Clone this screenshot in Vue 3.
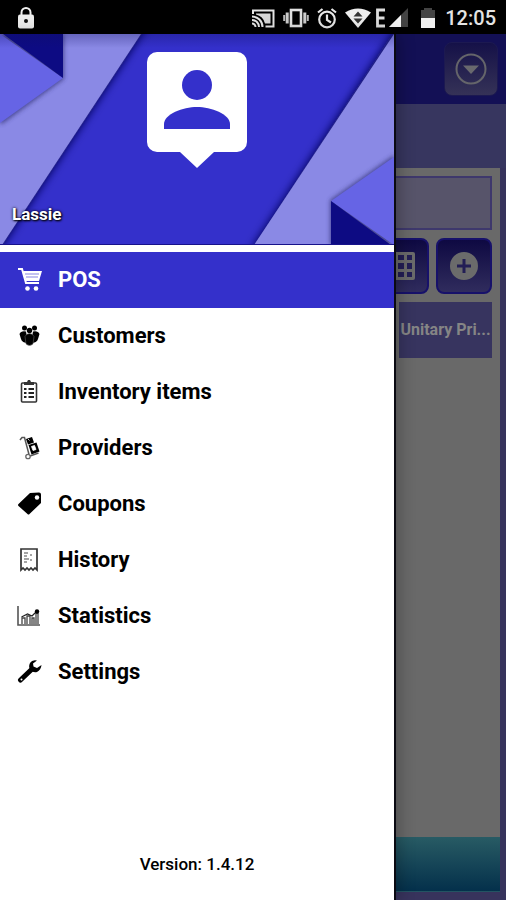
<script setup>
import { ref } from 'vue'

const items = [
  { id: 'pos', label: 'POS' },
  { id: 'customers', label: 'Customers' },
  { id: 'inventory', label: 'Inventory items' },
  { id: 'providers', label: 'Providers' },
  { id: 'coupons', label: 'Coupons' },
  { id: 'history', label: 'History' },
  { id: 'statistics', label: 'Statistics' },
  { id: 'settings', label: 'Settings' },
]
const active = ref('pos')
const search = ref('')
</script>

<template>
  <div class="screen">
    <header class="status">
      <svg class="lock" width="18" height="24" viewBox="0 0 18 24" aria-hidden="true">
        <path d="M4.500 10V6.500a4.500 4.500 0 0 1 9 0V10" fill="none" stroke="#eee" stroke-width="2" />
        <rect x="1" y="8.500" width="16" height="14" rx="2" fill="#eee" />
        <circle cx="9" cy="15" r="2" fill="#111" />
      </svg>
      <div class="tray">
        <svg width="24" height="20" viewBox="0 0 24 20" aria-hidden="true">
          <path d="M5 5.500H19.500V15.500H14Q12 8 5 6.500Z" fill="#d8d8d8" />
          <g fill="none" stroke="#e6e6e6" stroke-width="2">
            <path d="M2 6V2.500h20.500v16h-8" />
            <path d="M1 15.500a3.500 3.500 0 0 1 3.500 3.500M1 12a7 7 0 0 1 7 7M1 8.500a10.500 10.500 0 0 1 10.500 10.500" />
          </g>
        </svg>
        <svg width="26" height="20" viewBox="0 0 26 20" aria-hidden="true">
          <rect x="8" y="2" width="10" height="16" fill="none" stroke="#e0e0e0" stroke-width="2.600" />
          <path d="M4.200 4.500v11M21.800 4.500v11" stroke="#ccc" stroke-width="3" />
          <path d="M1.200 7v6M24.800 7v6" stroke="#bbb" stroke-width="2" />
        </svg>
        <svg width="20" height="22" viewBox="0 0 20 22" aria-hidden="true">
          <g fill="none" stroke="#e6e6e6" stroke-width="2.200">
            <circle cx="10" cy="12.500" r="7.800" />
            <path d="M10 7.500v5.500l4 2.500M1 5.500l4.500-3.500M19 5.500l-4.500-3.500" />
          </g>
        </svg>
        <svg class="wifi" width="26" height="20" viewBox="0 0 26 20" aria-hidden="true">
          <path d="M0 4.500Q13-3.500 26 4.500L13 20Z" fill="#eee" />
          <path d="M13 3.500l4.500 5h-9ZM13 15.500l4.500-5h-9Z" fill="#333" />
        </svg>
        <svg class="signal" width="34" height="20" viewBox="0 0 34 20" aria-hidden="true">
          <path d="M10 2H2.500v16H10M2 10h7.500" fill="none" stroke="#ddd" stroke-width="2.800" />
          <path d="M14 19L33 0V19Z" fill="#444" />
          <path d="M14 19L26 7V19Z" fill="#f4f4f4" />
        </svg>
        <svg width="14" height="22" viewBox="0 0 14 22" aria-hidden="true">
          <path d="M0 3h3V1h8v2h3v8H0Z" fill="#444" />
          <path d="M0 11h14v10H0Z" fill="#f0f0f0" />
        </svg>
        <time class="clock">12:05</time>
      </div>
    </header>

    <div class="stage">
      <main class="page">
        <div class="appbar">
          <button class="more" type="button" aria-label="More">
            <svg width="32" height="32" viewBox="0 0 32 32" aria-hidden="true">
              <circle cx="16" cy="16" r="14.500" fill="none" stroke="#65656a" stroke-width="2" />
              <path d="M8 12.500h16L16 21Z" fill="#69696e" />
            </svg>
          </button>
        </div>
        <div class="band"></div>
        <section class="panel">
          <div class="work">
            <input v-model="search" class="field" type="text" aria-label="Search" />
            <div class="tools">
              <button type="button" aria-label="Keypad">
                <svg width="28" height="28" viewBox="0 0 28 28" aria-hidden="true">
                  <rect width="28" height="28" rx="2" fill="#6b6b6b" />
                  <path d="M3 3h5v5H3zM11 3h6v5h-6zM20 3h5v5h-5zM3 11h5v6H3zM11 11h6v6h-6zM20 11h5v6h-5zM3 20h5v5H3zM11 20h6v5h-6zM20 20h5v5h-5z" fill="#231e55" />
                </svg>
              </button>
              <button type="button" aria-label="Add">
                <svg width="28" height="28" viewBox="0 0 28 28" aria-hidden="true">
                  <circle cx="14" cy="14" r="14" fill="#6b6b6b" />
                  <path d="M14 7v14M7 14h14" stroke="#231e55" stroke-width="3" />
                </svg>
              </button>
            </div>
            <div class="column-head">Unitary Pri...</div>
          </div>
          <div class="total"></div>
        </section>
      </main>

      <aside class="drawer">
        <div class="banner">
          <svg class="art" viewBox="0 0 394 211" preserveAspectRatio="none" aria-hidden="true">
            <defs>
              <filter id="soft" x="-20%" y="-20%" width="140%" height="140%">
                <feGaussianBlur stdDeviation="4" />
              </filter>
              <filter id="fine" x="-20%" y="-20%" width="140%" height="140%">
                <feGaussianBlur stdDeviation="2" />
              </filter>
              <linearGradient id="topshade" x1="0" y1="0" x2="0" y2="1">
                <stop offset="0" stop-color="#101060" stop-opacity=".3" />
                <stop offset="1" stop-color="#101060" stop-opacity="0" />
              </linearGradient>
            </defs>
            <rect width="394" height="211" fill="#3430cb" />
            <path d="M-20 -10H149L2 213H-20Z" fill="#08085c" filter="url(#soft)" />
            <path d="M0 0H141L2 211H0Z" fill="#8a89e5" />
            <path d="M398 -10L251 215H410V-10Z" fill="#08085c" filter="url(#soft)" />
            <path d="M394 0L254 211H394Z" fill="#8a89e5" />
            <path d="M0 0H64V45L2 90H0Z" fill="#333377" opacity=".7" filter="url(#fine)" />
            <path d="M0 0L63 44L0 89Z" fill="#6664e5" />
            <path d="M3 0H63V44Z" fill="#0d0b83" />
            <path d="M394 121L330 166V211H394Z" fill="#333377" opacity=".7" filter="url(#fine)" />
            <path d="M394 123L331 167L394 211Z" fill="#6664e5" />
            <path d="M331 167V211H391Z" fill="#0d0b83" />
            <rect width="394" height="14" fill="url(#topshade)" />
            <path d="M0 210.500H394" stroke="#17128b" />
          </svg>
          <svg class="avatar" width="100" height="116" viewBox="0 0 100 116" aria-hidden="true">
            <path d="M10 0H90A10 10 0 0 1 100 10V90A10 10 0 0 1 90 100H67L50 116L33 100H10A10 10 0 0 1 0 90V10A10 10 0 0 1 10 0Z" fill="#fff" />
            <circle cx="50" cy="33" r="15" fill="#3430cb" />
            <path d="M17 77V72C17 62 36 55 50 55S83 62 83 72V77Z" fill="#3430cb" />
          </svg>
          <span class="user">Lassie</span>
        </div>

        <nav class="menu">
          <a
            v-for="item in items"
            :key="item.id"
            href="#"
            :class="['entry', { active: item.id === active }]"
            @click.prevent="active = item.id"
          >
            <svg width="26" height="26" viewBox="0 0 26 26" aria-hidden="true">
              <template v-if="item.id === 'pos'">
                <path d="M1 2H5L9 16H22" fill="none" stroke="#fff" stroke-width="2" />
                <path d="M6 4H25L22 14H9Z" fill="#fff" />
                <path d="M8 7h14M9 10h12" stroke="#8583e2" stroke-width="1" />
                <circle cx="10.500" cy="21.500" r="2.300" fill="#fff" />
                <circle cx="19" cy="21.500" r="2.300" fill="#fff" />
              </template>
              <template v-else-if="item.id === 'customers'">
                <circle cx="7.500" cy="5" r="2.500" />
                <circle cx="17.500" cy="5" r="2.500" />
                <circle cx="12.500" cy="7.500" r="2.700" />
                <path d="M2.500 11Q4 7.500 9 8.500L11 20Q5 20 4 16ZM22.500 11Q21 7.500 16 8.500L14 20Q20 20 21 16Z" />
                <path d="M8 13.500Q9.500 10.500 12.500 10.500T17 13.500L16 21Q12.500 24 9 21Z" stroke="#777" stroke-width=".5" />
              </template>
              <template v-else-if="item.id === 'inventory'">
                <rect x="4.500" y="4" width="15" height="19" rx="1" fill="none" stroke="#333" stroke-width="1.600" />
                <path d="M7 6V3h3l1-2h2l1 2h3v3Z" fill="#333" />
                <path d="M7 10h2.500M7 14h2.500M7 18h2.500M11.500 10H17M11.500 14H17M11.500 18H17" stroke="#222" stroke-width="1.800" />
              </template>
              <template v-else-if="item.id === 'providers'">
                <path d="M3 5l2-2.500h2.500l4.500 17" fill="none" stroke="#555" stroke-width="1.500" />
                <path d="M9 4l6-2 2 5.500-6 2ZM11.500 10l8-2.500 3 9-8 3Z" fill="#000" />
                <path d="M14.500 11.500l3-1 1.500 4-3 1ZM11 4l1.500 1.500" fill="#fff" stroke="#fff" stroke-width=".8" />
                <path d="M13 21l8.500-3" stroke="#555" stroke-width="1.400" />
                <circle cx="11" cy="21.500" r="2.200" fill="#fff" stroke="#666" stroke-width="1.300" />
              </template>
              <template v-else-if="item.id === 'coupons'">
                <path d="M13 2L22 1.500Q24 1.500 24 3.500V12L12.500 23Q11.500 24 10.500 23L1.500 15Q.5 14 1.500 13Z" />
                <circle cx="20" cy="6.500" r="2.200" fill="#fff" />
              </template>
              <template v-else-if="item.id === 'history'">
                <path d="M4 23V2H20V23l-2-2-2 2-2-2-2 2-2-2-2 2-2-2Z" fill="#fff" stroke="#333" stroke-width="1.700" />
                <path d="M7 6h4M7 9h3M7 12h5M7 15h3M13 8h2M13 13h2" stroke="#888" stroke-width="1.300" />
              </template>
              <template v-else-if="item.id === 'statistics'">
                <path d="M1 3V22H23" fill="none" stroke="#555" stroke-width="1.600" />
                <path d="M5 21v-6h3v6M10 21v-8h3v8M15 21v-6h2v6M19 21V10h2v11" fill="none" stroke="#444" stroke-width="1.300" />
                <path d="M4.500 14l6-3 4.500 2 5-5" fill="none" stroke="#222" stroke-width="1.200" />
                <circle cx="20" cy="8.500" r="2.200" />
              </template>
              <template v-else>
                <path d="M3.500 21L14 11" stroke="#000" stroke-width="5" stroke-linecap="round" />
                <path d="M20 1.500Q15 .5 13 4Q11 8 13.500 11T20 13Q24 11 24.500 6L20 9L16.500 7.500L16 4.500Z" />
                <circle cx="4.500" cy="20.500" r="1" fill="#fff" />
              </template>
            </svg>
            <span>{{ item.label }}</span>
          </a>
        </nav>

        <p class="version">Version: 1.4.12</p>
      </aside>
    </div>
  </div>
</template>

<style>
body {
  margin: 0;
}
</style>

<style scoped>
.screen {
  display: flex;
  flex-direction: column;
  min-height: 100vh;
  font-family: Roboto, "Liberation Sans", sans-serif;
  background: #37335c;
}
.status {
  display: flex;
  align-items: center;
  justify-content: space-between;
  height: 34px;
  padding: 2px 10px 0 17px;
  box-sizing: border-box;
  background: #000;
}
.tray {
  display: flex;
  align-items: center;
  gap: 8px;
}
.signal {
  margin-left: -4px;
  margin-right: 4px;
}
.clock {
  margin-left: 2px;
  color: #e4e4e4;
  font-size: 20px;
  line-height: 24px;
  font-weight: 500;
}
.stage {
  position: relative;
  display: flex;
  flex: 1;
}
.page {
  display: flex;
  flex: 1;
  flex-direction: column;
}
.appbar {
  display: flex;
  justify-content: flex-end;
  align-items: center;
  height: 70px;
  padding-right: 8px;
  background: #131055;
}
button {
  display: flex;
  align-items: center;
  justify-content: center;
  box-sizing: border-box;
  padding: 0;
}
.more {
  width: 54px;
  height: 54px;
  border: 1px solid #1c1951;
  border-radius: 8px;
  background: linear-gradient(#151148, #353257);
}
.band {
  height: 64px;
  background: #37365f;
}
.panel {
  display: flex;
  flex: 1;
  flex-direction: column;
  margin: 0 6px 8px;
  background: #696969;
}
.work {
  display: flex;
  flex: 1;
  flex-direction: column;
  gap: 8px;
  padding: 8px;
}
.field {
  box-sizing: border-box;
  width: 100%;
  height: 54px;
  border: 2px solid #3e386c;
  background: #57546a;
  color: #ccc;
}
.tools {
  display: flex;
  justify-content: flex-end;
  gap: 7px;
}
.tools button {
  width: 56px;
  height: 56px;
  border: 2px solid #17116a;
  border-radius: 8px;
  background: linear-gradient(#0e0942, #302c5d);
}
.column-head {
  align-self: flex-end;
  width: 93px;
  background: #37345f;
  color: #858585;
  font-size: 16px;
  line-height: 56px;
  font-weight: 700;
  text-align: center;
  white-space: nowrap;
}
.total {
  height: 54px;
  border-bottom: 1px solid #235462;
  background: linear-gradient(#285b64, #04304b);
}
.drawer {
  position: absolute;
  inset: 0 112px 0 0;
  display: flex;
  flex-direction: column;
  background: #fff;
  box-shadow: 2px 0 0 #0a0a12, 4px 0 16px rgba(0, 0, 0, 0.3);
}
.banner {
  position: relative;
  display: flex;
  justify-content: center;
  height: 211px;
  margin-bottom: 7px;
}
.art {
  position: absolute;
  inset: 0;
  width: 100%;
  height: 100%;
}
.avatar {
  position: relative;
  margin-top: 18px;
}
.user {
  position: absolute;
  left: 12px;
  bottom: 20px;
  color: #fff;
  font-size: 17px;
  line-height: 22px;
  font-weight: 700;
  text-shadow: 1px 1px 2px #000, 0 0 3px #000;
}
.menu {
  display: flex;
  flex-direction: column;
}
.entry {
  display: flex;
  align-items: center;
  gap: 15px;
  height: 56px;
  padding-left: 17px;
  color: #000;
  font-size: 22px;
  line-height: 28px;
  font-weight: 700;
  text-decoration: none;
}
.entry.active {
  background: #3430cb;
  color: #fff;
}
.version {
  margin: auto 0 26px;
  color: #000;
  font-size: 17px;
  line-height: 20px;
  font-weight: 500;
  text-align: center;
}
</style>
